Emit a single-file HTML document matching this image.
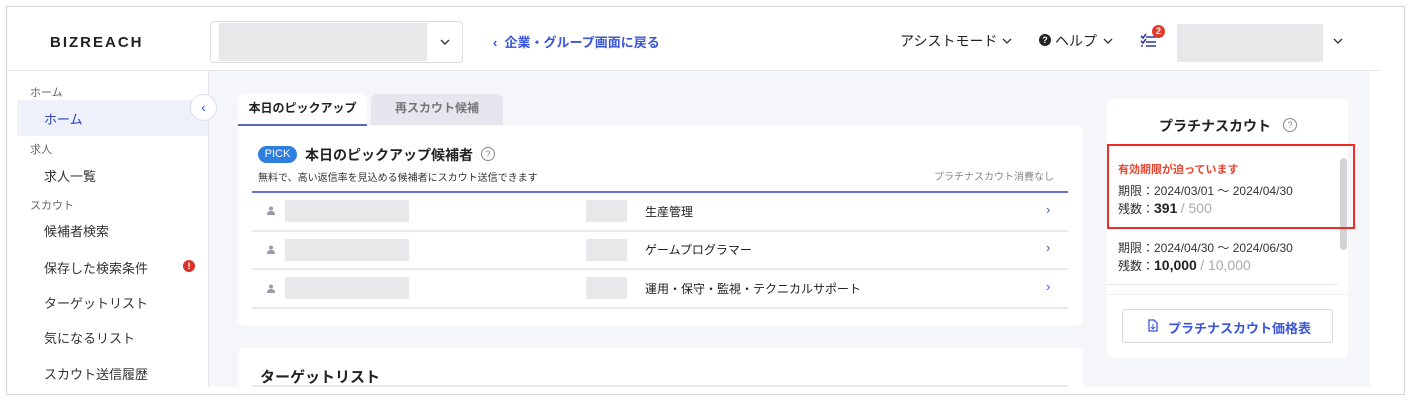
<!DOCTYPE html>
<html><head><meta charset="utf-8"><style>
*{box-sizing:border-box;margin:0;padding:0}
body{width:1411px;height:403px;background:#fff;font-family:"Liberation Sans","Noto Sans CJK JP",sans-serif;color:#222;position:relative;overflow:hidden}
.a{position:absolute;white-space:nowrap}
.frame{left:6px;top:6px;width:1399px;height:389px;border:1px solid #d6d6d6}
.gray{background:#e8e8ea}
.side{font-size:13px;color:#333}
.lbl{font-size:11px;color:#666}
.row{left:252px;width:816px;height:2px;background:#e8e9ef}
</style></head><body>
<div class="a frame"></div>
<div class="a" style="left:7px;top:70px;width:1373px;height:1px;background:#e4e5ea"></div>
<div class="a" style="left:50px;top:34px;font-size:15px;letter-spacing:2px;color:#222;font-weight:600">BIZREACH</div>
<div class="a" style="left:210px;top:21px;width:253px;height:42px;border:1px solid #ddd;border-radius:4px"></div>
<div class="a gray" style="left:219px;top:23px;width:208px;height:38px"></div>
<svg class="a" style="left:440px;top:38px" width="10" height="8"><path d="M1 2l4 4 4-4" fill="none" stroke="#333" stroke-width="1.4"/></svg>
<div class="a" style="left:493px;top:32px;font-size:13px;font-weight:bold;color:#3a56d6">‹&nbsp;&nbsp;企業・グループ画面に戻る</div>
<div class="a" style="left:900px;top:31px;font-size:14px">アシストモード</div>
<svg class="a" style="left:1002px;top:37px" width="10" height="8"><path d="M1 2l4 4 4-4" fill="none" stroke="#333" stroke-width="1.3"/></svg>
<div class="a" style="left:1039px;top:34px;width:12px;height:12px;border-radius:50%;background:#222;color:#fff;font-size:9px;font-weight:bold;text-align:center;line-height:12px">?</div>
<div class="a" style="left:1055px;top:31px;font-size:14px">ヘルプ</div>
<svg class="a" style="left:1103px;top:37px" width="10" height="8"><path d="M1 2l4 4 4-4" fill="none" stroke="#333" stroke-width="1.3"/></svg>
<svg class="a" style="left:1140px;top:32px" width="20" height="16"><path d="M1 4l2 2 3-4M1 9l2 2 3-4M1 14h2M6 5h10M6 10h10M6 14h10" fill="none" stroke="#2a3a9a" stroke-width="1.6"/></svg>
<div class="a" style="left:1152px;top:25px;width:13px;height:13px;border-radius:50%;background:#e33b2b;color:#fff;font-size:9px;font-weight:bold;text-align:center;line-height:13px">2</div>
<div class="a gray" style="left:1177px;top:24px;width:146px;height:38px"></div>
<svg class="a" style="left:1333px;top:37px" width="10" height="8"><path d="M1 2l4 4 4-4" fill="none" stroke="#333" stroke-width="1.3"/></svg>
<div class="a" style="left:208px;top:71px;width:1px;height:316px;background:#e4e5ea"></div>
<div class="a lbl" style="left:30px;top:84px">ホーム</div>
<div class="a" style="left:17px;top:100px;width:191px;height:36px;background:#eef0fa"></div>
<div class="a side" style="left:44px;top:109px;color:#2e3fb8">ホーム</div>
<div class="a lbl" style="left:30px;top:141px">求人</div>
<div class="a side" style="left:44px;top:166px">求人一覧</div>
<div class="a lbl" style="left:30px;top:197px">スカウト</div>
<div class="a side" style="left:44px;top:221px">候補者検索</div>
<div class="a side" style="left:44px;top:258px">保存した検索条件</div>
<div class="a" style="left:183px;top:260px;width:12px;height:12px;border-radius:50%;background:#d9342b;color:#fff;font-size:9px;font-weight:bold;text-align:center;line-height:12px">!</div>
<div class="a side" style="left:44px;top:293px">ターゲットリスト</div>
<div class="a side" style="left:44px;top:328px">気になるリスト</div>
<div class="a side" style="left:44px;top:364px">スカウト送信履歴</div>
<div class="a" style="left:209px;top:71px;width:1161px;height:316px;background:#f5f6fa"></div>
<div class="a" style="left:190px;top:94px;width:27px;height:27px;border-radius:50%;background:#fff;border:1px solid #dde;color:#3a56d6;font-size:14px;text-align:center;line-height:24px">‹</div>
<div class="a" style="left:238px;top:94px;width:129px;height:32px;background:#fff;border-radius:6px 6px 0 0;border-bottom:2px solid #5a68c0;font-size:12px;font-weight:bold;text-align:center;line-height:28px">本日のピックアップ</div>
<div class="a" style="left:371px;top:94px;width:132px;height:31px;background:#e6e7ee;border-radius:6px 6px 0 0;font-size:12px;font-weight:bold;color:#777;text-align:center;line-height:28px">再スカウト候補</div>
<div class="a" style="left:238px;top:126px;width:845px;height:200px;background:#fff;border-radius:0 6px 6px 6px"></div>
<div class="a" style="left:258px;top:146px;width:39px;height:17px;border-radius:9px;background:#2e7fe0;color:#fff;font-size:11px;text-align:center;line-height:17px">PICK</div>
<div class="a" style="left:305px;top:145px;font-size:14px;font-weight:bold">本日のピックアップ候補者</div>
<div class="a" style="left:481px;top:147px;width:14px;height:14px;border-radius:50%;border:1px solid #888;color:#888;font-size:9px;text-align:center;line-height:12px">?</div>
<div class="a" style="left:258px;top:169px;font-size:10px;color:#333">無料で、高い返信率を見込める候補者にスカウト送信できます</div>
<div class="a" style="left:934px;top:168px;font-size:10px;color:#888">プラチナスカウト消費なし</div>
<div class="a" style="left:252px;top:191px;width:816px;height:2px;background:#6872c8"></div>
<div class="a row" style="top:230px"></div>
<div class="a row" style="top:268px"></div>
<div class="a row" style="top:307px"></div>
<svg class="a" style="left:267px;top:206px" width="8" height="9"><circle cx="4" cy="2.5" r="2" fill="#9a9aa8"/><path d="M0 9c0-3 1.5-4 4-4s4 1 4 4z" fill="#9a9aa8"/></svg>
<div class="a gray" style="left:285px;top:200px;width:124px;height:22px"></div>
<div class="a gray" style="left:586px;top:200px;width:41px;height:22px"></div>
<div class="a" style="left:645px;top:203px;font-size:12px">生産管理</div>
<div class="a" style="left:1046px;top:202px;font-size:13px;color:#3a56d6">›</div>
<svg class="a" style="left:267px;top:245px" width="8" height="9"><circle cx="4" cy="2.5" r="2" fill="#9a9aa8"/><path d="M0 9c0-3 1.5-4 4-4s4 1 4 4z" fill="#9a9aa8"/></svg>
<div class="a gray" style="left:285px;top:239px;width:124px;height:22px"></div>
<div class="a gray" style="left:586px;top:239px;width:41px;height:22px"></div>
<div class="a" style="left:645px;top:241px;font-size:12px">ゲームプログラマー</div>
<div class="a" style="left:1046px;top:240px;font-size:13px;color:#3a56d6">›</div>
<svg class="a" style="left:267px;top:284px" width="8" height="9"><circle cx="4" cy="2.5" r="2" fill="#9a9aa8"/><path d="M0 9c0-3 1.5-4 4-4s4 1 4 4z" fill="#9a9aa8"/></svg>
<div class="a gray" style="left:285px;top:277px;width:124px;height:22px"></div>
<div class="a gray" style="left:586px;top:277px;width:41px;height:22px"></div>
<div class="a" style="left:645px;top:280px;font-size:12px">運用・保守・監視・テクニカルサポート</div>
<div class="a" style="left:1046px;top:279px;font-size:13px;color:#3a56d6">›</div>
<div class="a" style="left:238px;top:348px;width:845px;height:39px;background:#fff;border-radius:6px 6px 0 0"></div>
<div class="a" style="left:260px;top:366px;font-size:15px;font-weight:bold">ターゲットリスト</div>
<div class="a" style="left:252px;top:385px;width:816px;height:2px;background:#e8e9ef"></div>
<div class="a" style="left:1107px;top:99px;width:241px;height:259px;background:#fff;border-radius:6px"></div>
<div class="a" style="left:1159px;top:116px;font-size:14px;font-weight:bold">プラチナスカウト</div>
<div class="a" style="left:1283px;top:118px;width:14px;height:14px;border-radius:50%;border:1px solid #888;color:#888;font-size:9px;text-align:center;line-height:12px">?</div>
<div class="a" style="left:1340px;top:158px;width:7px;height:92px;background:#d4d4d6;border-radius:4px"></div>
<div class="a" style="left:1107px;top:144px;width:248px;height:85px;border:2px solid #ee2b24"></div>
<div class="a" style="left:1118px;top:161px;font-size:11px;font-weight:bold;color:#e8452f">有効期限が迫っています</div>
<div class="a" style="left:1118px;top:182px;font-size:12px;color:#333">期限：2024/03/01 〜 2024/04/30</div>
<div class="a" style="left:1118px;top:200px;font-size:12px;color:#333">残数：<b style="font-size:14px;color:#222">391</b> <span style="font-size:14px;color:#aaa">/ 500</span></div>
<div class="a" style="left:1118px;top:239px;font-size:12px;color:#333">期限：2024/04/30 〜 2024/06/30</div>
<div class="a" style="left:1118px;top:257px;font-size:12px;color:#333">残数：<b style="font-size:14px;color:#222">10,000</b> <span style="font-size:14px;color:#aaa">/ 10,000</span></div>
<div class="a" style="left:1107px;top:284px;width:231px;height:1px;background:#e6e7ec"></div>
<div class="a" style="left:1107px;top:294px;width:241px;height:1px;background:#eceef2"></div>
<div class="a" style="left:1122px;top:309px;width:211px;height:34px;border:1px solid #d8d8dc;border-radius:3px"></div>
<svg class="a" style="left:1148px;top:319px" width="10" height="13"><path d="M1 1h5l3 3v8H1z" fill="none" stroke="#3a56d6" stroke-width="1.3"/><path d="M5 5v5M3 8l2 2 2-2" fill="none" stroke="#3a56d6" stroke-width="1"/></svg>
<div class="a" style="left:1168px;top:318px;font-size:13px;font-weight:bold;color:#3a56d6">プラチナスカウト価格表</div>
</body></html>
